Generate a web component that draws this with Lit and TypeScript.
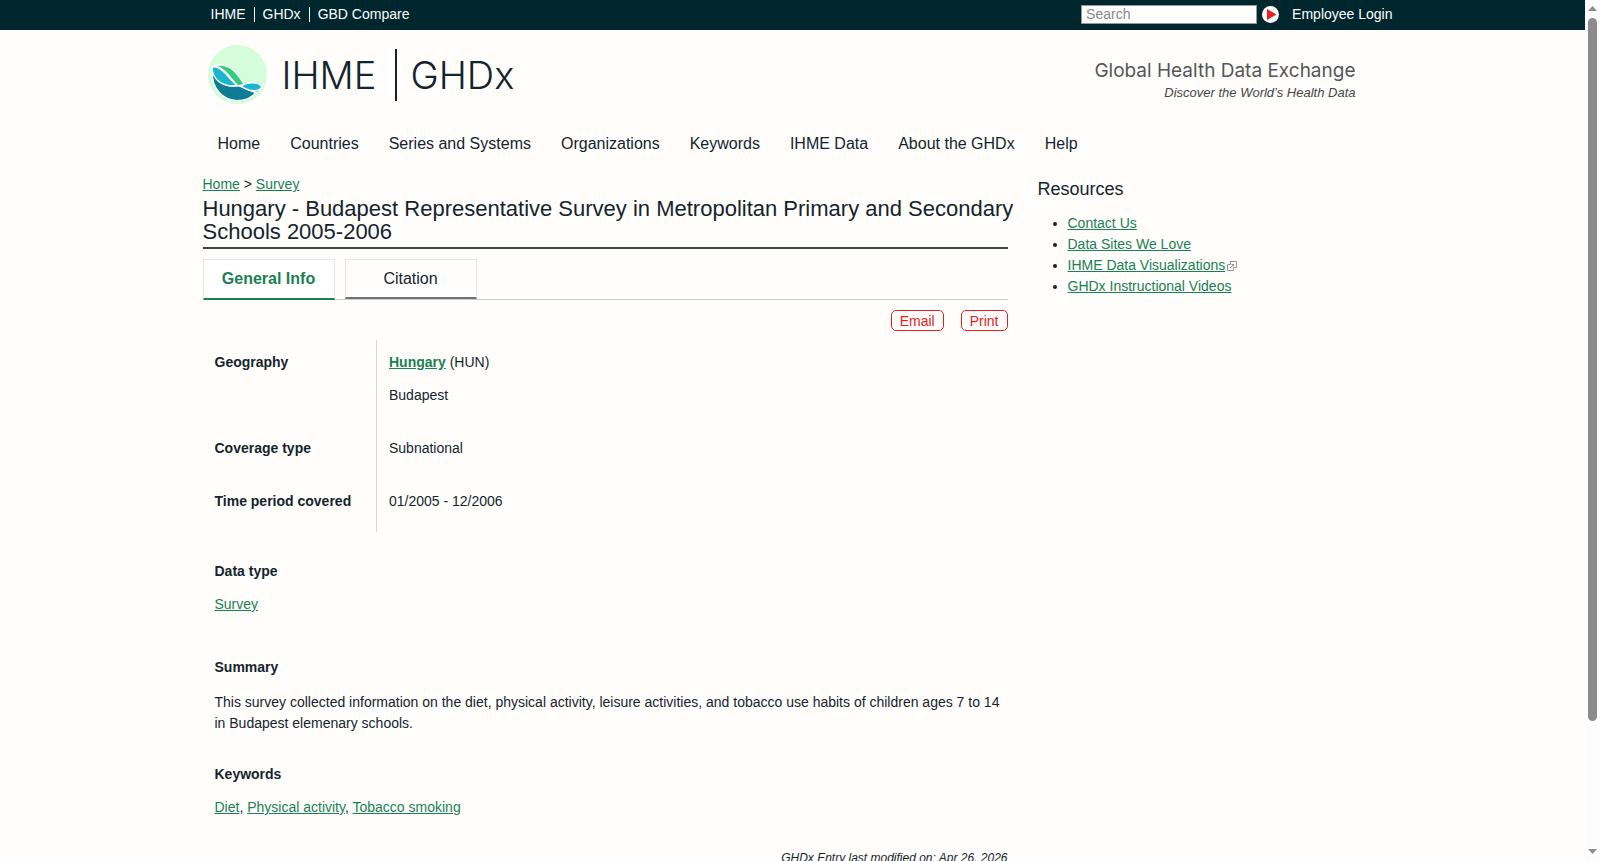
import { LitElement, html, css } from "lit";
import { customElement } from "lit/decorators.js";

const NAV = ["Home", "Countries", "Series and Systems", "Organizations", "Keywords", "IHME Data", "About the GHDx", "Help"];
const TOP_LINKS = ["IHME", "GHDx", "GBD Compare"];
const KEYWORDS = ["Diet", "Physical activity", "Tobacco smoking"];
const RESOURCES = [
  { label: "Contact Us", external: false },
  { label: "Data Sites We Love", external: false },
  { label: "IHME Data Visualizations", external: true },
  { label: "GHDx Instructional Videos", external: false },
];

const base = css`
  * { box-sizing: border-box; }
  h1, h2, p, ul { margin: 0; padding: 0; font-weight: inherit; }
  ul { list-style: none; }
  a { color: #1b7f52; text-decoration: underline; }
`;

@customElement("ghdx-topbar")
class GhdxTopbar extends LitElement {
  static styles = [base, css`
    :host { display: block; background: #00262e; color: #fff; }
    .inner { display: flex; align-items: center; max-width: 1200px; height: 30px; margin: 0 auto; padding: 0 0 2px 10px; }
    a { color: #fff; text-decoration: none; }
    .links { display: flex; }
    .links li { padding: 0 8px; line-height: 15px; }
    .links li + li { border-left: 1px solid #fff; }
    .search { display: flex; align-items: center; gap: 5px; margin: 0 13px 0 auto; }
    .box { width: 176px; height: 19px; padding: 0 4px; border: 1px solid #999; border-radius: 0; background: #fffefd; color: #222; font: inherit; outline: none; }
    .box::placeholder { color: #888; opacity: 1; }
    .go { display: flex; width: 17px; height: 17px; padding: 0; border: 0; border-radius: 50%; background: #fff; }
  `];
  render() {
    return html`<div class="inner">
      <ul class="links">${TOP_LINKS.map((t) => html`<li><a href="#">${t}</a></li>`)}</ul>
      <form class="search" role="search" @submit=${(e: Event) => e.preventDefault()}>
        <input class="box" type="text" aria-label="Search" placeholder="Search" />
        <button class="go" aria-label="Submit search">
          <svg width="17" height="17" viewBox="0 0 17 17"><path d="M5 3 L14.5 8.500 L5 14z" fill="#e8221a" /></svg>
        </button>
      </form>
      <a href="#">Employee Login</a>
    </div>`;
  }
}

@customElement("ghdx-header")
class GhdxHeader extends LitElement {
  static styles = [base, css`
    :host { display: block; max-width: 1200px; margin: 0 auto; padding: 0 10px; }
    .brand { display: flex; align-items: center; justify-content: space-between; padding: 15px 27px 0 5px; }
    .logo { display: flex; align-items: center; color: #14242b; text-decoration: none; font: 300 38px/52px Inter, sans-serif; }
    .mark { width: 59px; height: 59px; margin-right: 15px; }
    .unit { padding-left: 13px; margin-left: 19px; border-left: 2px solid #14242b; }
    .tag { text-align: right; color: #555; padding-top: 12px; }
    .name { font: 19px/24px Inter, sans-serif; }
    .motto { font-size: 13px; line-height: 20px; font-style: italic; color: #444; }
    .nav { display: flex; flex-wrap: wrap; padding-top: 27px; font-size: 16px; line-height: 26px; }
    .nav a { padding: 0 15px; color: #14242b; text-decoration: none; }
  `];
  render() {
    return html`
      <div class="brand">
        <a class="logo" href="#">
          <svg class="mark" viewBox="24 14 177 177" aria-hidden="true">
            <circle cx="112.500" cy="102.500" r="88.500" fill="#d4fedb" />
            <g stroke="#fff" stroke-width="4" stroke-linejoin="round">
              <path d="M36 88 C44 118 76 142 112 136 C134 138 146 158 170 154 C154 174 134 181 112 181 C70 180 34 148 36 88Z" fill="#0f7c96" />
              <path d="M36 80 C66 74 84 114 112 136 C72 142 36 120 36 80Z" fill="#1ab6d0" />
              <path d="M40 76 C86 66 108 92 132 131 C126 134 119 136 112 136 C90 112 76 82 40 76Z" fill="#33cc7f" />
              <path d="M124 138 C142 124 176 124 185 139 C182 154 148 156 124 138Z" fill="#1ab6d0" />
              <path d="M156 152 C164 154 172 152 180 150 C174 160 164 158 156 152Z" fill="#33cc7f" stroke-width="3" />
            </g>
          </svg>
          <span>IHME</span><span class="unit">GHDx</span>
        </a>
        <div class="tag">
          <p class="name">Global Health Data Exchange</p>
          <p class="motto">Discover the World’s Health Data</p>
        </div>
      </div>
      <nav class="nav">${NAV.map((t) => html`<a href="#">${t}</a>`)}</nav>`;
  }
}

@customElement("ghdx-record")
class GhdxRecord extends LitElement {
  static styles = [base, css`
    :host { display: block; min-width: 0; }
    .title { margin-top: 2px; padding-bottom: 4px; border-bottom: 2px solid #444; font-size: 22px; line-height: 23px; }
    .title span { display: block; margin-right: -12px; }
    .tabs { display: flex; gap: 10px; margin-top: 10px; height: 41px; border-bottom: 1px solid #ccc; }
    .tab { width: 132px; height: 40px; padding: 0; border: 1px solid #e6e6e6; border-bottom: 2px solid #69737a; background: #fffefd; color: #14242b; font: 16px/24px "Liberation Sans", Arial, sans-serif; }
    .tab.active { height: 41px; border-bottom-color: #1b7f52; background: #fff; color: #1b7f52; font-weight: bold; }
    .actions { display: flex; justify-content: flex-end; gap: 17px; margin: 10px 0 9px; }
    .action { height: 21px; padding: 0 8px; border: 1px solid #e8221a; border-radius: 5px; background: transparent; color: #e8221a; font: inherit; line-height: 18px; }
    .facts { border-collapse: collapse; }
    .facts th, .facts td { padding: 12px 12px 20px; text-align: left; vertical-align: top; }
    .facts th { width: 174px; border-right: 1px solid #d8d8d8; }
    .facts p + p { margin-top: 12px; }
    .block { padding-left: 12px; }
    .block h2 { margin-bottom: 12px; font-size: 14px; font-weight: bold; }
    .type { margin-top: 29px; }
    .summary { margin-top: 42px; }
    .summary h2 { margin-bottom: 14px; }
    .keywords { margin-top: 30px; }
    .modified { padding: 30px 0; text-align: right; font-size: 12px; font-style: italic; }
  `];
  render() {
    return html`
      <nav aria-label="Breadcrumb"><a href="#">Home</a> &gt; <a href="#">Survey</a></nav>
      <h1 class="title"><span>Hungary - Budapest Representative Survey in Metropolitan Primary and Secondary Schools 2005-2006</span></h1>
      <div class="tabs" role="tablist">
        <button class="tab active" role="tab" aria-selected="true">General Info</button>
        <button class="tab" role="tab" aria-selected="false">Citation</button>
      </div>
      <div class="actions">
        <button class="action">Email</button>
        <button class="action">Print</button>
      </div>
      <table class="facts">
        <tr><th scope="row">Geography</th><td><p><a href="#"><b>Hungary</b></a> (HUN)</p><p>Budapest</p></td></tr>
        <tr><th scope="row">Coverage type</th><td>Subnational</td></tr>
        <tr><th scope="row">Time period covered</th><td>01/2005 - 12/2006</td></tr>
      </table>
      <section class="block type"><h2>Data type</h2><p><a href="#">Survey</a></p></section>
      <section class="block summary">
        <h2>Summary</h2>
        <p>This survey collected information on the diet, physical activity, leisure activities, and tobacco use habits of children ages 7 to 14 in Budapest elemenary schools.</p>
      </section>
      <section class="block keywords">
        <h2>Keywords</h2>
        <p>${KEYWORDS.map((k, i) => html`${i ? ", " : ""}<a href="#">${k}</a>`)}</p>
      </section>
      <p class="modified">GHDx Entry last modified on: Apr 26, 2026</p>`;
  }
}

@customElement("ghdx-resources")
class GhdxResources extends LitElement {
  static styles = [base, css`
    :host { display: block; }
    h2 { font-size: 18px; line-height: 30px; margin-bottom: 9px; }
    ul { list-style: disc; padding-left: 30px; }
    .ext { width: 10px; height: 10px; margin-left: 2px; vertical-align: -1px; }
  `];
  render() {
    return html`<h2>Resources</h2>
      <ul>${RESOURCES.map((r) => html`<li><a href="#">${r.label}</a>${r.external
        ? html`<svg class="ext" viewBox="0 0 10 10" fill="none" stroke="#999" aria-label="external link"><path d="M3.500 3.500h-3v6h6v-3M3.500 3.500v-3h6v6h-3M3 7l3.500-3.500M4.500 3.500h2v2" /></svg>`
        : ""}</li>`)}</ul>`;
  }
}

@customElement("app-root")
class AppRoot extends LitElement {
  static styles = [base, css`
    :host { display: grid; grid-template-columns: minmax(0, 1fr) 15px; height: 100vh; overflow: hidden; background: #fffefd; color: #14242b; font: 14px/21px "Liberation Sans", Arial, sans-serif; }
    .page { overflow-y: auto; scrollbar-width: none; }
    .body { display: grid; grid-template-columns: 7fr 3fr; gap: 30px; max-width: 1200px; margin: 0 auto; padding: 17px 10px 0; }
    .bar { display: flex; flex-direction: column; align-items: center; padding: 6px 3px 7px; background: #fcfcfc; }
    .thumb { flex: 0 1 703px; width: 9px; margin: 7px 0 auto; border-radius: 5px; background: #8b8b8b; }
  `];
  render() {
    return html`
      <div class="page">
        <ghdx-topbar></ghdx-topbar>
        <ghdx-header></ghdx-header>
        <main class="body">
          <ghdx-record></ghdx-record>
          <ghdx-resources></ghdx-resources>
        </main>
      </div>
      <div class="bar" aria-hidden="true">
        <svg width="9" height="5" viewBox="0 0 9 5"><path d="M0 5 L4.500 0 L9 5z" fill="#8b8b8b" /></svg>
        <div class="thumb"></div>
        <svg width="9" height="5" viewBox="0 0 9 5"><path d="M0 0 L4.500 5 L9 0z" fill="#8b8b8b" /></svg>
      </div>`;
  }
}
